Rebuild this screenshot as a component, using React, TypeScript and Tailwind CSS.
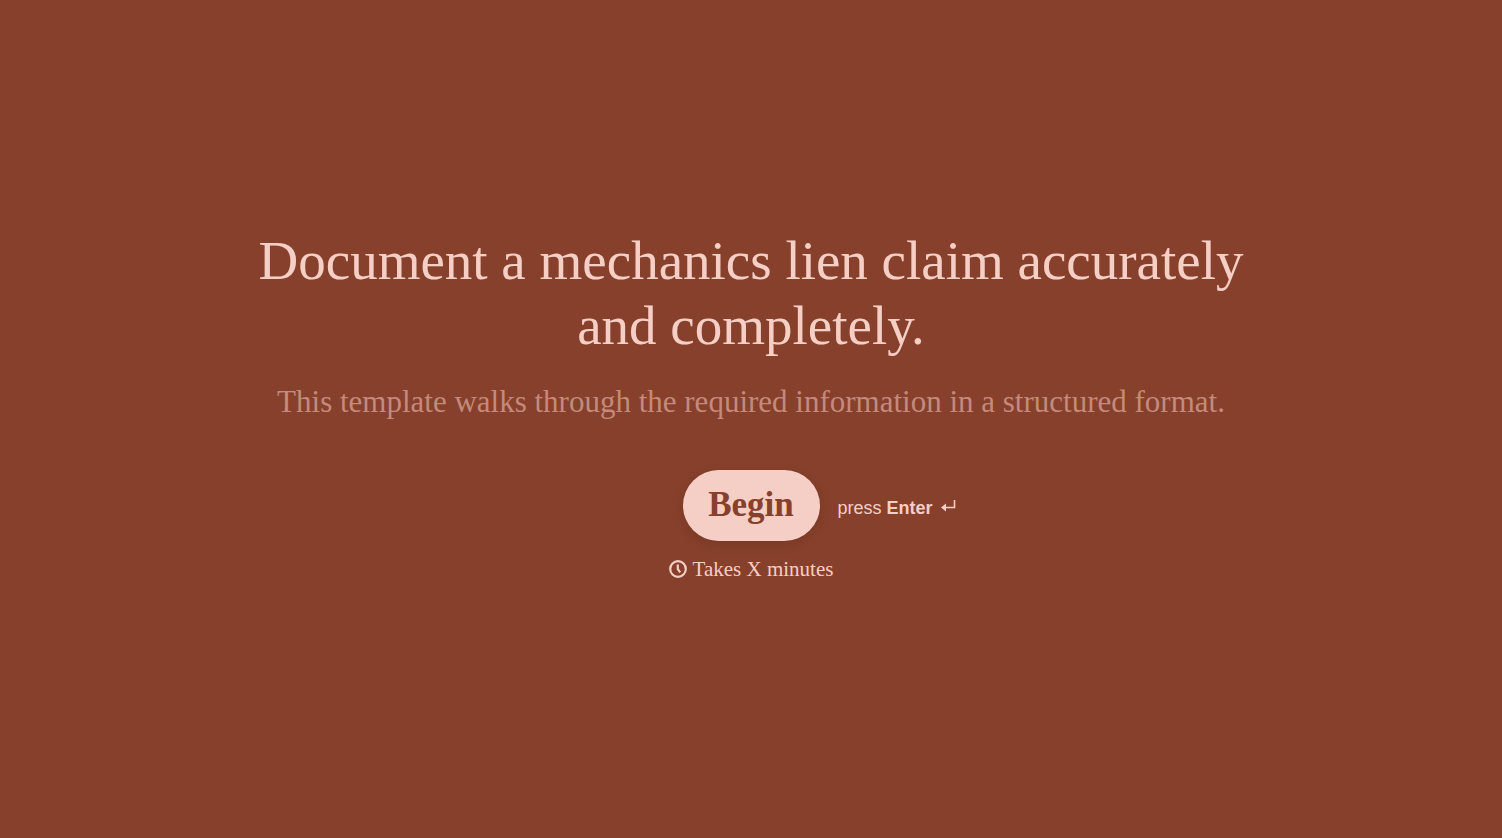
import React from "react";

function ClockIcon() {
  return (
    <svg width="18" height="18" viewBox="0 0 18 18" fill="none" stroke="currentColor" strokeWidth="2.2" aria-hidden="true">
      <circle cx="9" cy="9" r="7.8" />
      <path d="M8.8 4.5V9.2L11.2 12.4" />
    </svg>
  );
}

function EnterIcon() {
  return (
    <svg width="16" height="16" viewBox="0 0 16 16" aria-hidden="true">
      <path d="M13.5 0V7.5H4" fill="none" stroke="currentColor" strokeWidth="1.6" />
      <path d="M0 7.5L5 3.6V11.4Z" fill="currentColor" />
    </svg>
  );
}

export default function App() {
  return (
    <main className="flex min-h-screen flex-col items-center justify-center bg-[#87402b] px-8 pb-[30px] font-['Liberation_Serif',serif] text-[#f5cfc6]">
      <h1 className="max-w-[1040px] text-center text-[55px] leading-[65px]">
        Document a mechanics lien claim accurately and completely.
      </h1>
      <p className="mt-6 text-center text-[31px] leading-10 text-[#c48a7c]">
        This template walks through the required information in a structured format.
      </p>
      <div className="mt-12 grid grid-cols-[1fr_auto_1fr] items-center gap-x-[18px]">
        <span />
        <button type="button" className="h-[71px] w-[137px] rounded-full bg-[#f5cfc6] text-[35px] font-bold text-[#87402b] shadow-[0_3px_12px_rgba(0,0,0,0.12)]">
          Begin
        </button>
        <div className="flex items-center gap-2 pt-1.5 font-['Liberation_Sans',sans-serif] text-[18px]">
          <span>press <strong>Enter</strong></span>
          <EnterIcon />
        </div>
      </div>
      <div className="mt-4 flex items-center gap-1.5 text-[21px] leading-6">
        <ClockIcon />
        <span>Takes X minutes</span>
      </div>
    </main>
  );
}
